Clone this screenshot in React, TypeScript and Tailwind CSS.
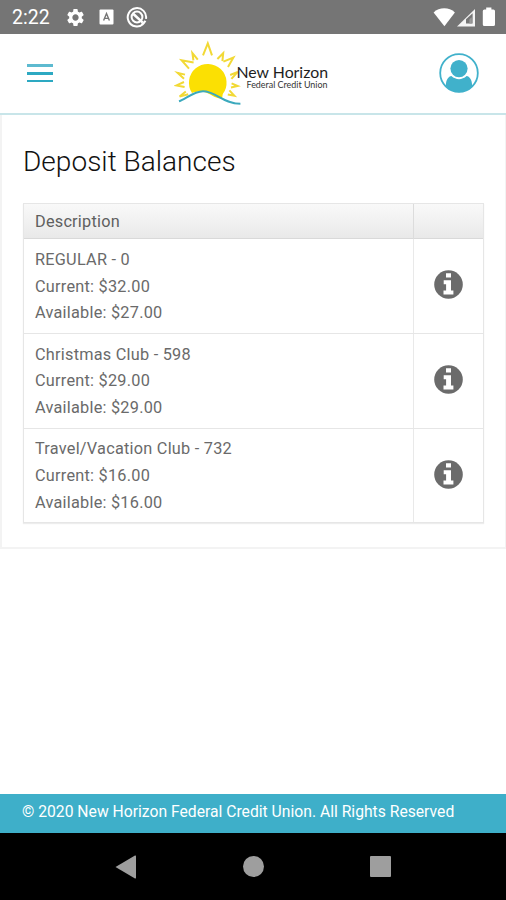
import { MdSettings } from "react-icons/md";

type Account = {
  name: string;
  current: string;
  available: string;
};

const accounts: Account[] = [
  { name: "REGULAR - 0", current: "$32.00", available: "$27.00" },
  { name: "Christmas Club - 598", current: "$29.00", available: "$29.00" },
  { name: "Travel/Vacation Club - 732", current: "$16.00", available: "$16.00" },
];

function StatusBar() {
  return (
    <div className="flex h-[34px] shrink-0 items-center bg-[#757575] pl-[12px] pr-[9px] text-white">
      <span className="w-[38px] whitespace-nowrap pt-[2px] text-[19.5px] leading-[32px]">2:22</span>
      <MdSettings className="ml-[15px] size-[21px]" />
      <svg className="ml-[13px]" width="15" height="16" viewBox="0 0 15 16">
        <rect x="0.5" y="0.5" width="14" height="15" rx="1" fill="#fff" />
        <path d="M4.6 11.6 7.5 4.6l2.9 7M5.6 9.4h3.8" fill="none" stroke="#757575" strokeWidth="1.4" />
      </svg>
      <svg className="ml-[12px]" width="22" height="22" viewBox="0 0 22 22" fill="none" stroke="#fff">
        <path d="M17.2 18A9.2 9.2 0 1 1 20 12.8M15.4 19a9.2 9.2 0 0 0 4-4.2" strokeWidth="2" />
        <circle cx="11" cy="11" r="5.4" strokeWidth="2" />
        <path d="m7.4 8 9.4 8.6" strokeWidth="2.6" />
      </svg>
      <svg className="ml-auto" width="64" height="22" viewBox="0 0 64 22" fill="#fff">
        <path d="M.6 6.4C6.3.8 16.2.8 21.9 6.4L11.4 20.3Z" />
        <path d="M42 3v17.4H24Z" fill="#f4f4f4" />
        <path d="M33 17.6v-4.4l6.6-6v10.4Z" fill="#757575" />
        <path d="M36.4 17.6v-4.4l2.4-2v6.4Z" fill="#9a9a9a" />
        <path d="M53.2 1.5h5.2v2h2a1.6 1.6 0 0 1 1.6 1.6v13.4a1.6 1.6 0 0 1-1.6 1.6h-9a1.6 1.6 0 0 1-1.6-1.6V5.1a1.6 1.6 0 0 1 1.6-1.6h1.8Z" />
      </svg>
    </div>
  );
}

function Logo() {
  return (
    <svg className="mb-[3px]" width="158" height="68" viewBox="0 0 158 68" role="img" aria-label="New Horizon Federal Credit Union">
      {/* Sun rays */}
      <g fill="none" stroke="#f2d935" strokeWidth="2">
        <path d="m29 17.4 4.8-12 4.2 12" />
        <path d="m23.8 21.6-5.4-6.6 1 7.4" />
        <path d="m19.6 24.6-12-2.4 7.4 8.4" />
        <path d="m43.4 21 5.8-5.8-.8 8" />
        <path d="m49.4 23.6 10-4-5.4 9.4" />
        <path d="m11 36.6-7.4-1.8 6.4 6" />
        <path d="m10 44-7.6 3.4 8.2 1.6" />
        <path d="m11.8 53.4-6.2 5.2 8.6-2.4" />
        <path d="m56.2 37 7.6-3.2-6.4 7" />
        <path d="m57.6 45.4 6 2.6-6.6 1.4" />
        <path d="m55.4 52.4 5 5.4-6.6-1.2" />
      </g>
      <path d="M18 55A18.8 18.8 0 1 1 48.8 56L48 60.4c-6.4 1-12-5.4-19-6.6-4-.6-7.600 0-11 1.200Z" fill="#fbe003" />
      <path
        d="M5 63.4C12 60.8 20 53.2 29 53.2c13 0 20 12.600 37.400 12.600"
        fill="none"
        stroke="#3ba9bd"
        strokeWidth="2"
      />
      <text x="62.5" y="39.5" textLength="91.5" lengthAdjust="spacingAndGlyphs" fontFamily="Lato, sans-serif" fontSize="15.5" fill="#1e1e1e">
        New Horizon
      </text>
      <text x="72.5" y="50" textLength="81" lengthAdjust="spacingAndGlyphs" fontFamily="Lato, sans-serif" fontSize="8.8" fill="#333">
        Federal Credit Union
      </text>
    </svg>
  );
}

function Header() {
  return (
    <header className="flex h-[81px] shrink-0 items-center justify-between border-b-2 border-[#c8e5e9] bg-white px-[27px]">
      <div className="mb-px flex w-[39px] flex-col gap-[5px]">
        <span className="h-[3px] w-[26px] bg-[#5dbad0]" />
        <span className="h-[2.5px] w-[26px] bg-[#2da9c2]" />
        <span className="h-[2.5px] w-[26px] bg-[#2da9c2]" />
      </div>
      <Logo />
      <svg className="mb-[2px]" width="40" height="40" viewBox="0 0 40 40">
        <circle cx="20" cy="20" r="18.8" fill="none" stroke="#40b1cb" strokeWidth="1.8" />
        <circle cx="20" cy="15.6" r="8.6" fill="#40b1cb" />
        <path d="M7 33.5c-.6-5.6 2.2-10.2 5.4-10.5 4.6 4.2 10.6 4.2 15.2 0 3.2.3 6 4.9 5.4 10.5-7 7.5-19 7.5-26 0Z" fill="#40b1cb" />
      </svg>
    </header>
  );
}

function InfoIcon() {
  return (
    <svg width="29" height="29" viewBox="0 0 29 29">
      <circle cx="14.5" cy="14.5" r="14.3" fill="#6b6b6b" />
      <path d="M12 3.2h5v4.4h-5ZM9.7 10.2h7.3v10.4h2.4v4H9.5v-4h2.6v-6.4H9.7Z" fill="#fff" />
    </svg>
  );
}

function AccountRow({ account }: { account: Account }) {
  return (
    <div className="grid h-[94.8px] grid-cols-[390px_1fr] border-b border-[#e6e6e6]">
      <div className="border-r border-[#e9e9e9] pl-[11px] pt-[7.9px] text-[16.3px] leading-[26.7px] tracking-[0.24px] text-[#6a6a6a]">
        <p>{account.name}</p>
        <p>Current: {account.current}</p>
        <p>Available: {account.available}</p>
      </div>
      <div className="flex items-center justify-center pb-[2px]">
        <InfoIcon />
      </div>
    </div>
  );
}

export default function App() {
  return (
    <div className="flex h-[900px] w-[506px] flex-col overflow-hidden bg-white font-['Roboto',sans-serif]">
      <StatusBar />
      <Header />

      {/* Balances */}
      <main className="h-[434px] shrink-0 border-b-2 border-l-2 border-r border-[#f3f3f3] px-[21px]">
        <h1 className="pt-[30px] text-[28px] font-light leading-[34px] tracking-[0.02px] text-[#111]">
          Deposit Balances
        </h1>
        <div className="mt-[24px] border-x border-t border-[#e6e6e6] shadow-[0_1px_1px_#ededed]">
          <div className="grid h-[35px] grid-cols-[390px_1fr] border-b border-[#d9d9d9] bg-linear-to-b from-[#f9f9f9] to-[#e9e9e9]">
            <div className="border-r border-[#dcdcdc] pl-[11px] text-[16.3px] leading-[36px] tracking-[0.22px] text-[#5f5f5f]">
              Description
            </div>
            <div />
          </div>
          {accounts.map((account) => (
            <AccountRow key={account.name} account={account} />
          ))}
        </div>
      </main>

      <footer className="mt-auto h-[39px] shrink-0 bg-[#3eafc9] pl-[22px] pt-px text-[15.7px] leading-[34px] text-white">
        © 2020 New Horizon Federal Credit Union. All Rights Reserved
      </footer>

      {/* Android navigation */}
      <nav className="flex h-[67px] shrink-0 items-center justify-between bg-black px-[115px]">
        <svg width="21" height="24" viewBox="0 0 21 24" fill="#9e9e9e">
          <path d="M.5 12 20 .6q1-.4 1 .6v21.6q0 1-1 .6Z" />
        </svg>
        <span className="size-[21px] rounded-full bg-[#9e9e9e]" />
        <span className="size-[21px] rounded-[1px] bg-[#9e9e9e]" />
      </nav>
    </div>
  );
}
